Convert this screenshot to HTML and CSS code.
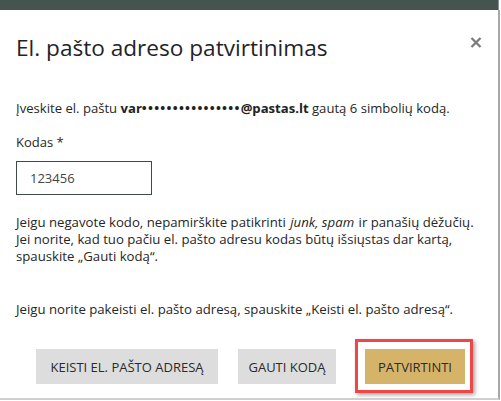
FILE: index.html
```html
<!DOCTYPE html>
<html lang="lt">
<head>
<meta charset="utf-8">
<title>El. pašto adreso patvirtinimas</title>
<link rel="stylesheet" href="styles.css">
</head>
<body>
<div class="topbar"></div>
<div class="dialog">
  <div class="header">
    <h1 class="title">El. pašto adreso patvirtinimas</h1>
    <span class="close" aria-label="Uždaryti"><svg width="12" height="11" viewBox="0 0 12 11"><path d="M1.5 1 L10.5 10 M10.5 1 L1.5 10" stroke="#7c7c7c" stroke-width="2.3" stroke-linecap="butt" fill="none"/></svg></span>
  </div>
  <p class="intro">Įveskite el. paštu <b>var<span class="dots">&bull;&bull;&bull;&bull;&bull;&bull;&bull;&bull;&bull;&bull;&bull;&bull;&bull;&bull;&bull;&bull;</span>@pastas.lt</b> gautą 6 simbolių kodą.</p>
  <label class="label" for="kodas">Kodas *</label>
  <input id="kodas" class="input" type="text" value="123456">
  <p class="note">Jeigu negavote kodo, nepamirškite patikrinti <i>junk, spam</i> ir panašių dėžučių.<br>Jei norite, kad tuo pačiu el. pašto adresu kodas būtų išsiųstas dar kartą,<br>spauskite „Gauti kodą“.</p>
  <p class="note2">Jeigu norite pakeisti el. pašto adresą, spauskite „Keisti el. pašto adresą“.</p>
  <div class="footer">
    <button class="btn btn-gray btn-change">KEISTI EL. PAŠTO ADRESĄ</button>
    <button class="btn btn-gray btn-code">GAUTI KODĄ</button>
    <div class="highlight">
      <button class="btn btn-gold">PATVIRTINTI</button>
    </div>
  </div>
</div>
</body>
</html>
```
FILE: styles.css
```css
html, body {
  margin: 0;
  padding: 0;
  background: #ffffff;
}
body {
  font-family: "Open Sans", "Noto Sans", sans-serif;
  color: #262626;
  width: 501px;
  height: 401px;
  overflow: hidden;
}
.topbar {
  height: 10px;
  background: #46544f;
  width: 498px;
  border-right: 1px solid #8a9490;
}
.dialog {
  width: 466px;
  height: 388px;
  padding: 0 16px;
  border-right: 2px solid #a8a8a8;
  border-bottom: 2px solid #d0d0d0;
  box-sizing: content-box;
  overflow: hidden;
}
.header {
  display: flex;
  justify-content: space-between;
  align-items: flex-start;
  padding-top: 22px;
}
.title {
  margin: 0;
  font-size: 22.6px;
  font-weight: 400;
  line-height: 32px;
  color: #1f2428;
}
.close {
  display: block;
  width: 12px;
  height: 11px;
  margin-top: 5px;
}
.close svg {
  display: block;
}
.intro {
  margin: 35px 0 0;
  font-size: 13.1px;
  line-height: 18px;
}
.intro b {
  font-weight: 700;
  color: #222;
}
.dots {
  letter-spacing: 1.25px;
}
.label {
  display: block;
  margin-top: 16px;
  font-size: 13px;
  line-height: 18px;
}
.input {
  display: block;
  margin-top: 10px;
  width: 136px;
  height: 34px;
  box-sizing: border-box;
  border: 1.5px solid #404b48;
  padding: 0 13px;
  font-family: inherit;
  font-size: 13px;
  color: #444;
  outline: none;
}
.note {
  margin: 19px 0 0;
  font-size: 13.2px;
  line-height: 17px;
  white-space: nowrap;
}
.note i {
  font-style: italic;
  padding: 0 1px;
}
.note2 {
  margin: 36px 0 0;
  font-size: 13.2px;
  line-height: 17px;
}
.footer {
  display: flex;
  align-items: flex-start;
  margin-top: 21px;
  padding-left: 20px;
}
.btn {
  height: 35px;
  border: none;
  font-family: inherit;
  font-size: 13px;
  color: #2b2b2b;
  padding: 0;
  cursor: pointer;
}
.btn-gray {
  background: #dcdddc;
  margin-top: 10px;
}
.btn-change {
  width: 182px;
  margin-right: 20px;
}
.btn-code {
  width: 98px;
  margin-right: 19px;
}
.btn-gold {
  display: block;
  background: #d5b46a;
  width: 100px;
}
.highlight {
  border: 3px solid #ef4646;
  padding: 7px 5px 6px 7px;
  box-shadow: 2px 2px 4px rgba(0,0,0,0.35);
}
```
